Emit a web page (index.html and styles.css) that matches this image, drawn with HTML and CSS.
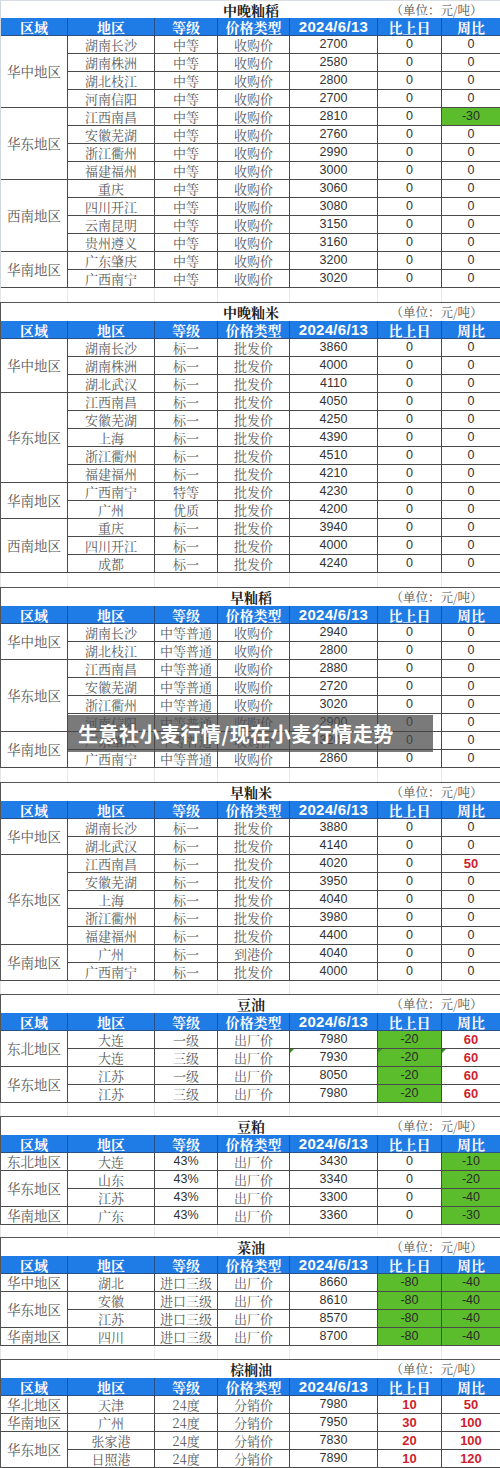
FILE: index.html
```html
<!DOCTYPE html>
<html lang="zh">
<head>
<meta charset="utf-8">
<link rel="stylesheet" href="styles.css">
</head>
<body>
<div class="page">

<div class="tbl first">
  <div class="title">中晚籼稻</div><div class="unit">（单位：元/吨）</div>
  <span class="h">区域</span><span class="h">地区</span><span class="h">等级</span><span class="h">价格类型</span><span class="h d">2024/6/13</span><span class="h">比上日</span><span class="h">周比</span>
  <span class="r s4">华中地区</span><span>湖南长沙</span><span>中等</span><span>收购价</span><span class="n">2700</span><span class="n">0</span><span class="n">0</span>
  <span>湖南株洲</span><span>中等</span><span>收购价</span><span class="n">2580</span><span class="n">0</span><span class="n">0</span>
  <span>湖北枝江</span><span>中等</span><span>收购价</span><span class="n">2800</span><span class="n">0</span><span class="n">0</span>
  <span>河南信阳</span><span>中等</span><span>收购价</span><span class="n">2700</span><span class="n">0</span><span class="n">0</span>
  <span class="r s4">华东地区</span><span>江西南昌</span><span>中等</span><span>收购价</span><span class="n">2810</span><span class="n">0</span><span class="n g">-30</span>
  <span>安徽芜湖</span><span>中等</span><span>收购价</span><span class="n">2760</span><span class="n">0</span><span class="n">0</span>
  <span>浙江衢州</span><span>中等</span><span>收购价</span><span class="n">2990</span><span class="n">0</span><span class="n">0</span>
  <span>福建福州</span><span>中等</span><span>收购价</span><span class="n">3000</span><span class="n">0</span><span class="n">0</span>
  <span class="r s4">西南地区</span><span>重庆</span><span>中等</span><span>收购价</span><span class="n">3060</span><span class="n">0</span><span class="n">0</span>
  <span>四川开江</span><span>中等</span><span>收购价</span><span class="n">3080</span><span class="n">0</span><span class="n">0</span>
  <span>云南昆明</span><span>中等</span><span>收购价</span><span class="n">3150</span><span class="n">0</span><span class="n">0</span>
  <span>贵州遵义</span><span>中等</span><span>收购价</span><span class="n">3160</span><span class="n">0</span><span class="n">0</span>
  <span class="r s2">华南地区</span><span>广东肇庆</span><span>中等</span><span>收购价</span><span class="n">3200</span><span class="n">0</span><span class="n">0</span>
  <span>广西南宁</span><span>中等</span><span>收购价</span><span class="n">3020</span><span class="n">0</span><span class="n">0</span>
</div>
<div class="gap g14"><i></i><i></i><i></i><i></i><i></i><i></i><i></i></div>

<div class="tbl">
  <div class="title">中晚籼米</div><div class="unit">（单位：元/吨）</div>
  <span class="h">区域</span><span class="h">地区</span><span class="h">等级</span><span class="h">价格类型</span><span class="h d">2024/6/13</span><span class="h">比上日</span><span class="h">周比</span>
  <span class="r s3">华中地区</span><span>湖南长沙</span><span>标一</span><span>批发价</span><span class="n">3860</span><span class="n">0</span><span class="n">0</span>
  <span>湖南株洲</span><span>标一</span><span>批发价</span><span class="n">4000</span><span class="n">0</span><span class="n">0</span>
  <span>湖北武汉</span><span>标一</span><span>批发价</span><span class="n">4110</span><span class="n">0</span><span class="n">0</span>
  <span class="r s5">华东地区</span><span>江西南昌</span><span>标一</span><span>批发价</span><span class="n">4050</span><span class="n">0</span><span class="n">0</span>
  <span>安徽芜湖</span><span>标一</span><span>批发价</span><span class="n">4250</span><span class="n">0</span><span class="n">0</span>
  <span>上海</span><span>标一</span><span>批发价</span><span class="n">4390</span><span class="n">0</span><span class="n">0</span>
  <span>浙江衢州</span><span>标一</span><span>批发价</span><span class="n">4510</span><span class="n">0</span><span class="n">0</span>
  <span>福建福州</span><span>标一</span><span>批发价</span><span class="n">4210</span><span class="n">0</span><span class="n">0</span>
  <span class="r s2">华南地区</span><span>广西南宁</span><span>特等</span><span>批发价</span><span class="n">4230</span><span class="n">0</span><span class="n">0</span>
  <span>广州</span><span>优质</span><span>批发价</span><span class="n">4200</span><span class="n">0</span><span class="n">0</span>
  <span class="r s3">西南地区</span><span>重庆</span><span>标一</span><span>批发价</span><span class="n">3940</span><span class="n">0</span><span class="n">0</span>
  <span>四川开江</span><span>标一</span><span>批发价</span><span class="n">4000</span><span class="n">0</span><span class="n">0</span>
  <span>成都</span><span>标一</span><span>批发价</span><span class="n">4240</span><span class="n">0</span><span class="n">0</span>
</div>
<div class="gap g14"><i></i><i></i><i></i><i></i><i></i><i></i><i></i></div>

<div class="tbl">
  <div class="title">早籼稻</div><div class="unit">（单位：元/吨）</div>
  <span class="h">区域</span><span class="h">地区</span><span class="h">等级</span><span class="h">价格类型</span><span class="h d">2024/6/13</span><span class="h">比上日</span><span class="h">周比</span>
  <span class="r s2">华中地区</span><span>湖南长沙</span><span>中等普通</span><span>收购价</span><span class="n">2940</span><span class="n">0</span><span class="n">0</span>
  <span>湖北枝江</span><span>中等普通</span><span>收购价</span><span class="n">2800</span><span class="n">0</span><span class="n">0</span>
  <span class="r s4">华东地区</span><span>江西南昌</span><span>中等普通</span><span>收购价</span><span class="n">2880</span><span class="n">0</span><span class="n">0</span>
  <span>安徽芜湖</span><span>中等普通</span><span>收购价</span><span class="n">2720</span><span class="n">0</span><span class="n">0</span>
  <span>浙江衢州</span><span>中等普通</span><span>收购价</span><span class="n">3020</span><span class="n">0</span><span class="n">0</span>
  <span>河南信阳</span><span>中等普通</span><span>收购价</span><span class="n">2900</span><span class="n">0</span><span class="n">0</span>
  <span class="r s2">华南地区</span><span>广东肇庆</span><span>中等普通</span><span>收购价</span><span class="n">3200</span><span class="n">0</span><span class="n">0</span>
  <span>广西南宁</span><span>中等普通</span><span>收购价</span><span class="n">2860</span><span class="n">0</span><span class="n">0</span>
  <div class="banner">生意社小麦行情/现在小麦行情走势</div>
</div>
<div class="gap g14"><i></i><i></i><i></i><i></i><i></i><i></i><i></i></div>

<div class="tbl">
  <div class="title">早籼米</div><div class="unit">（单位：元/吨）</div>
  <span class="h">区域</span><span class="h">地区</span><span class="h">等级</span><span class="h">价格类型</span><span class="h d">2024/6/13</span><span class="h">比上日</span><span class="h">周比</span>
  <span class="r s2">华中地区</span><span>湖南长沙</span><span>标一</span><span>批发价</span><span class="n">3880</span><span class="n">0</span><span class="n">0</span>
  <span>湖北武汉</span><span>标一</span><span>批发价</span><span class="n">4140</span><span class="n">0</span><span class="n">0</span>
  <span class="r s5">华东地区</span><span>江西南昌</span><span>标一</span><span>批发价</span><span class="n">4020</span><span class="n">0</span><span class="n red">50</span>
  <span>安徽芜湖</span><span>标一</span><span>批发价</span><span class="n">3950</span><span class="n">0</span><span class="n">0</span>
  <span>上海</span><span>标一</span><span>批发价</span><span class="n">4040</span><span class="n">0</span><span class="n">0</span>
  <span>浙江衢州</span><span>标一</span><span>批发价</span><span class="n">3980</span><span class="n">0</span><span class="n">0</span>
  <span>福建福州</span><span>标一</span><span>批发价</span><span class="n">4400</span><span class="n">0</span><span class="n">0</span>
  <span class="r s2">华南地区</span><span>广州</span><span>标一</span><span>到港价</span><span class="n">4040</span><span class="n">0</span><span class="n">0</span>
  <span>广西南宁</span><span>标一</span><span>批发价</span><span class="n">4000</span><span class="n">0</span><span class="n">0</span>
</div>
<div class="gap"><i></i><i></i><i></i><i></i><i></i><i></i><i></i></div>

<div class="tbl">
  <div class="title">豆油</div><div class="unit">（单位：元/吨）</div>
  <span class="h">区域</span><span class="h">地区</span><span class="h">等级</span><span class="h">价格类型</span><span class="h d">2024/6/13</span><span class="h">比上日</span><span class="h">周比</span>
  <span class="r s2">东北地区</span><span>大连</span><span>一级</span><span>出厂价</span><span class="n">7980</span><span class="n g">-20</span><span class="n red">60</span>
  <span>大连</span><span>三级</span><span>出厂价</span><span class="n tri">7930</span><span class="n g tri">-20</span><span class="n red tri">60</span>
  <span class="r s2">华东地区</span><span>江苏</span><span>一级</span><span>出厂价</span><span class="n">8050</span><span class="n g">-20</span><span class="n red">60</span>
  <span>江苏</span><span>三级</span><span>出厂价</span><span class="n">7980</span><span class="n g">-20</span><span class="n red">60</span>
</div>
<div class="gap"><i></i><i></i><i></i><i></i><i></i><i></i><i></i></div>

<div class="tbl">
  <div class="title">豆粕</div><div class="unit">（单位：元/吨）</div>
  <span class="h">区域</span><span class="h">地区</span><span class="h">等级</span><span class="h">价格类型</span><span class="h d">2024/6/13</span><span class="h">比上日</span><span class="h">周比</span>
  <span class="r">东北地区</span><span>大连</span><span class="n">43%</span><span>出厂价</span><span class="n">3430</span><span class="n">0</span><span class="n g">-10</span>
  <span class="r s2">华东地区</span><span>山东</span><span class="n">43%</span><span>出厂价</span><span class="n">3340</span><span class="n">0</span><span class="n g">-20</span>
  <span>江苏</span><span class="n">43%</span><span>出厂价</span><span class="n">3300</span><span class="n">0</span><span class="n g">-40</span>
  <span class="r">华南地区</span><span>广东</span><span class="n">43%</span><span>出厂价</span><span class="n">3360</span><span class="n">0</span><span class="n g">-30</span>
</div>
<div class="gap g12"><i></i><i></i><i></i><i></i><i></i><i></i><i></i></div>

<div class="tbl">
  <div class="title">菜油</div><div class="unit">（单位：元/吨）</div>
  <span class="h">区域</span><span class="h">地区</span><span class="h">等级</span><span class="h">价格类型</span><span class="h d">2024/6/13</span><span class="h">比上日</span><span class="h">周比</span>
  <span class="r">华中地区</span><span>湖北</span><span>进口三级</span><span>出厂价</span><span class="n">8660</span><span class="n g">-80</span><span class="n g">-40</span>
  <span class="r s2">华东地区</span><span>安徽</span><span>进口三级</span><span>出厂价</span><span class="n">8610</span><span class="n g">-80</span><span class="n g">-40</span>
  <span>江苏</span><span>进口三级</span><span>出厂价</span><span class="n">8570</span><span class="n g">-80</span><span class="n g">-40</span>
  <span class="r">华南地区</span><span>四川</span><span>进口三级</span><span>出厂价</span><span class="n">8700</span><span class="n g">-80</span><span class="n g">-40</span>
</div>
<div class="gap"><i></i><i></i><i></i><i></i><i></i><i></i><i></i></div>

<div class="tbl">
  <div class="title">棕榈油</div><div class="unit">（单位：元/吨）</div>
  <span class="h">区域</span><span class="h">地区</span><span class="h">等级</span><span class="h">价格类型</span><span class="h d">2024/6/13</span><span class="h">比上日</span><span class="h">周比</span>
  <span class="r">华北地区</span><span>天津</span><span>24度</span><span>分销价</span><span class="n">7980</span><span class="n red">10</span><span class="n red">50</span>
  <span class="r">华南地区</span><span>广州</span><span>24度</span><span>分销价</span><span class="n">7950</span><span class="n red">30</span><span class="n red">100</span>
  <span class="r s2">华东地区</span><span>张家港</span><span>24度</span><span>分销价</span><span class="n">7830</span><span class="n red">20</span><span class="n red">100</span>
  <span>日照港</span><span>24度</span><span>分销价</span><span class="n">7890</span><span class="n red">10</span><span class="n red">120</span>
</div>

</div>
</body>
</html>
```

FILE: styles.css
```css
html, body {
  margin: 0;
  padding: 0;
  background: #ffffff;
}
body {
  width: 500px;
  overflow: hidden;
  font-family: "Noto Serif CJK SC", "Noto Sans CJK SC", serif;
}
.page {
  width: 501px;
}
.tbl {
  position: relative;
  display: grid;
  grid-template-columns: 67px 87px 63px 72px 88px 64px 59px;
  grid-template-rows: 19px;
  grid-auto-rows: 18px;
  border-left: 1px solid #555;
}
.tbl.first {
  grid-template-rows: 18px;
  border-left-color: #cfd6dd;
}
.tbl > span {
  box-sizing: border-box;
  display: flex;
  align-items: center;
  justify-content: center;
  border-right: 1px solid #4a4a4a;
  border-bottom: 1px solid #4a4a4a;
  font-size: 13px;
  line-height: 1;
  color: #5a5a5a;
  white-space: nowrap;
  position: relative;
}
.title {
  grid-column: 1 / -1;
  grid-row: 1;
  box-sizing: border-box;
  border-top: 1px solid #555;
  display: flex;
  align-items: center;
  justify-content: center;
  font-size: 14px;
  font-weight: bold;
  color: #1e1e1e;
}
.tbl.first .title {
  border-top-color: #d8dee4;
}
.unit {
  grid-column: 6 / 8;
  grid-row: 1;
  display: flex;
  align-items: center;
  justify-content: center;
  padding-right: 6px;
  font-size: 12.5px;
  color: #555;
  padding-top: 1px;
}
.tbl > span.h {
  background: #1f7be6;
  color: #ffffff;
  font-weight: bold;
  font-size: 14px;
  border-right-color: #26508a;
  border-bottom-color: #2a4f80;
}
.tbl > span.h.d {
  font-family: "Liberation Sans", Arial, sans-serif;
  font-size: 15px;
  letter-spacing: 0.3px;
}
.tbl > span.r {
  color: #5a5a5a;
  font-size: 13.5px;
}
.s2 { grid-row: span 2; }
.s3 { grid-row: span 3; }
.s4 { grid-row: span 4; }
.s5 { grid-row: span 5; }
.tbl > span.n {
  font-family: "Liberation Sans", Arial, sans-serif;
  font-size: 12.5px;
  color: #333;
}
.tbl > span.g {
  background: #5cbd2c;
  color: #2a2a2a;
}
.tbl > span.red {
  color: #cf1f2e;
  font-weight: bold;
  font-size: 13px;
}
.tri::before {
  content: "";
  position: absolute;
  left: 0;
  top: 0;
  border-top: 4px solid #3a8a2a;
  border-right: 4px solid transparent;
}
.gap {
  display: grid;
  grid-template-columns: 67px 87px 63px 72px 88px 64px 59px;
  height: 13px;
  border-left: 1px solid #e2e5e8;
}
.gap.g14 { height: 14px; }
.gap.g12 { height: 12px; }
.gap i {
  border-right: 1px solid #e6e8ea;
}
.banner {
  position: absolute;
  left: 67px;
  top: 128px;
  width: 365px;
  height: 37px;
  box-sizing: border-box;
  padding-left: 10px;
  display: flex;
  align-items: center;
  background: rgba(70, 70, 70, 0.72);
  color: #ffffff;
  font-family: "Noto Sans CJK SC", sans-serif;
  font-weight: bold;
  font-size: 20px;
  letter-spacing: 0.5px;
}
```
